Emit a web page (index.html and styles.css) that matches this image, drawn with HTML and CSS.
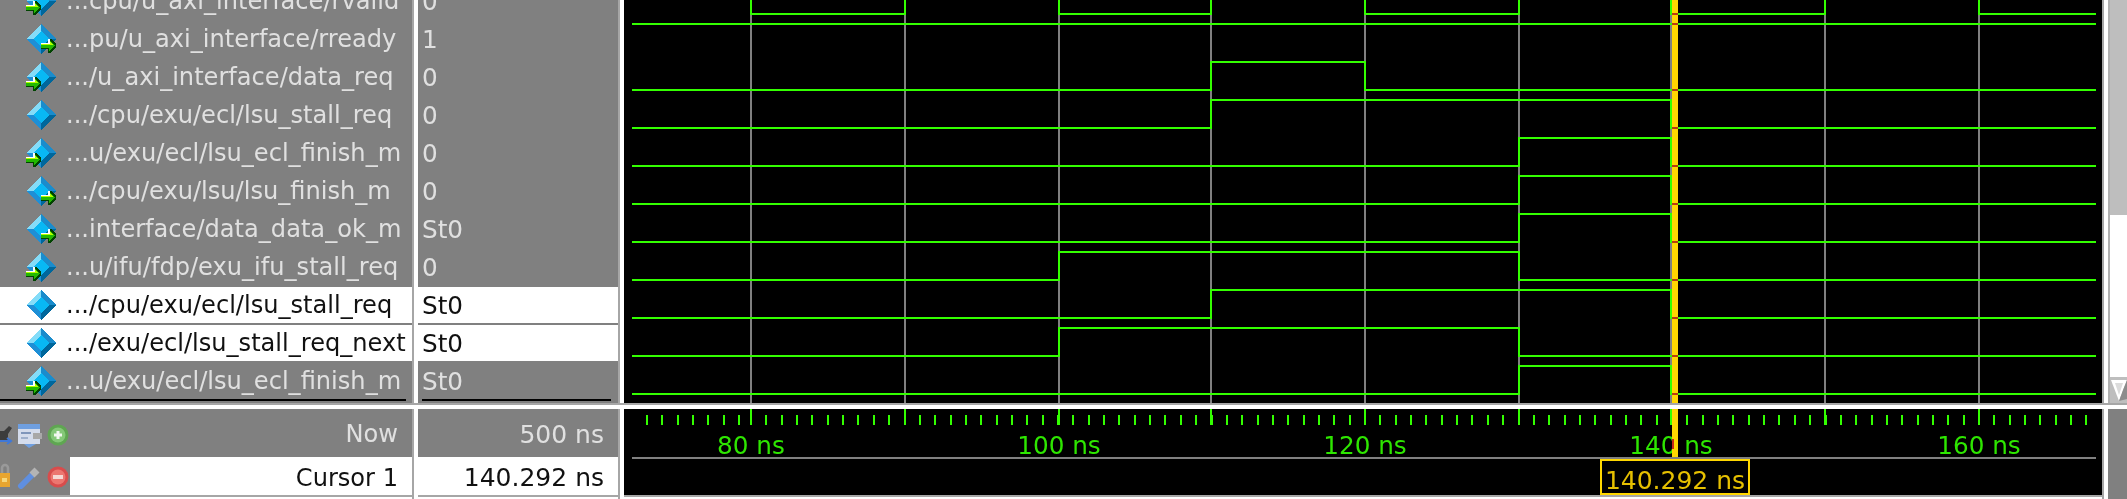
FILE: index.html
```html
<!DOCTYPE html>
<html>
  <head>
    <title>Wave</title>
    <link rel="stylesheet" href="styles.css">
  </head>
  <body>
    <svg class="defs" width="0" height="0">
      <symbol id="diamond" viewBox="0 0 30 30">
        <polygon points="15,0 30,15 15,30 0,15" fill="#1e8fd6"/>
        <polygon points="15,0 15,7 7,15 0,15" fill="#84dcf8"/>
        <polygon points="15,0 30,15 23,15 15,7" fill="#1a8ccc"/>
        <polygon points="30,15 15,30 15,23 23,15" fill="#00679c"/>
        <polygon points="15,7 23,15 15,23 7,15" fill="#08b8f4"/>
      </symbol>
      <symbol id="arrow" viewBox="0 0 15 15">
        <polygon points="8,0 10,0 15,5 15,8 9,14 7,14 7,10 0,10 0,4 8,4" fill="#004400"/>
        <polygon points="8,1 14,6 14,7 8,12 8,9 0,9 0,5 8,5" fill="#22b800"/>
        <polygon points="8,2 13,6 0,6 0,5 8,5" fill="#b4ff00"/>
        <rect x="7" y="0" width="2" height="5" fill="#fff"/>
        <rect x="0" y="4" width="8" height="1" fill="#fff"/>
      </symbol>
    </svg>

    <div class="main">
      <div class="names">
        <div class="row"><svg class="sig"><use href="#diamond" width="30" height="30"/><use href="#arrow" y="15" width="15" height="15"/></svg><span>...cpu/u_axi_interface/rvalid</span></div>
        <div class="row"><svg class="sig"><use href="#diamond" width="30" height="30"/><use href="#arrow" x="15" y="15" width="15" height="15"/></svg><span>...pu/u_axi_interface/rready</span></div>
        <div class="row"><svg class="sig"><use href="#diamond" width="30" height="30"/><use href="#arrow" y="15" width="15" height="15"/></svg><span>.../u_axi_interface/data_req</span></div>
        <div class="row"><svg class="sig"><use href="#diamond" width="30" height="30"/></svg><span>.../cpu/exu/ecl/lsu_stall_req</span></div>
        <div class="row"><svg class="sig"><use href="#diamond" width="30" height="30"/><use href="#arrow" y="15" width="15" height="15"/></svg><span>...u/exu/ecl/lsu_ecl_finish_m</span></div>
        <div class="row"><svg class="sig"><use href="#diamond" width="30" height="30"/><use href="#arrow" x="15" y="15" width="15" height="15"/></svg><span>.../cpu/exu/lsu/lsu_finish_m</span></div>
        <div class="row"><svg class="sig"><use href="#diamond" width="30" height="30"/><use href="#arrow" x="15" y="15" width="15" height="15"/></svg><span>...interface/data_data_ok_m</span></div>
        <div class="row"><svg class="sig"><use href="#diamond" width="30" height="30"/><use href="#arrow" y="15" width="15" height="15"/></svg><span>...u/ifu/fdp/exu_ifu_stall_req</span></div>
        <div class="row picked"><svg class="sig"><use href="#diamond" width="30" height="30"/></svg><span>.../cpu/exu/ecl/lsu_stall_req</span></div>
        <div class="row picked"><svg class="sig"><use href="#diamond" width="30" height="30"/></svg><span>.../exu/ecl/lsu_stall_req_next</span></div>
        <div class="row last"><svg class="sig"><use href="#diamond" width="30" height="30"/><use href="#arrow" y="15" width="15" height="15"/></svg><span>...u/exu/ecl/lsu_ecl_finish_m</span></div>
        <div class="rule"></div>
      </div>
      <div class="split"></div>
      <div class="values">
        <div class="row"><span>0</span></div>
        <div class="row"><span>1</span></div>
        <div class="row"><span>0</span></div>
        <div class="row"><span>0</span></div>
        <div class="row"><span>0</span></div>
        <div class="row"><span>0</span></div>
        <div class="row"><span>St0</span></div>
        <div class="row"><span>0</span></div>
        <div class="row picked"><span>St0</span></div>
        <div class="row picked"><span>St0</span></div>
        <div class="row last"><span>St0</span></div>
        <div class="rule"></div>
      </div>
      <div class="split"></div>
      <svg class="wave" viewBox="624 0 1478 403">
        <path class="grid" d="M751 0V403M905 0V403M1059 0V403M1211 0V403M1365 0V403M1519 0V403M1671 0V403M1825 0V403M1979 0V403"/>
        <path class="trace" d="M751 -2V14H905V-2M1059 -2V14H1211V-2M1365 -2V14H1519V-2M1671 -2V14H1825V-2M1979 -2V14H2096"/>
        <path class="trace" d="M632 24H2096"/>
        <path class="trace" d="M632 90H1211V62H1365V90H2096"/>
        <path class="trace" d="M632 128H1211V100H1671V128H2096"/>
        <path class="trace" d="M632 166H1519V138H1671V166H2096"/>
        <path class="trace" d="M632 204H1519V176H1671V204H2096"/>
        <path class="trace" d="M632 242H1519V214H1671V242H2096"/>
        <path class="trace" d="M632 280H1059V252H1519V280H2096"/>
        <path class="trace" d="M632 318H1211V290H1671V318H2096"/>
        <path class="trace" d="M632 356H1059V328H1519V356H2096"/>
        <path class="trace" d="M632 394H1519V366H1671V394H2096"/>
        <rect class="cursor" x="1672" y="0" width="6" height="403"/>
        <path class="cross" d="M1672 14h6M1672 24h6M1672 90h6M1672 128h6M1672 166h6M1672 204h6M1672 242h6M1672 280h6M1672 318h6M1672 356h6M1672 394h6"/>
      </svg>
      <div class="split"></div>
      <div class="scroll">
        <div class="thumb"></div>
        <div class="track"></div>
        <div class="btn">
          <svg width="17" height="26" viewBox="0 0 17 26">
            <polygon points="1,3 17,3 9,24" fill="#fff"/>
            <polygon points="9,24 13,13 17,3 17,22" fill="#8c8c8c"/>
            <polygon points="5,6 13,6 9,18" fill="#dcdcdc"/>
          </svg>
        </div>
      </div>
    </div>

    <div class="hsplit"></div>

    <div class="foot">
      <div class="names">
        <div class="now">
          <svg class="tools" viewBox="0 409 70 48">
            <path d="M0 431h4l5-5 3 2-4 6v6H0z" fill="#3c3c3c"/>
            <path d="M0 441h10M7 438l4 3-4 3" stroke="#3f78d8" stroke-width="2" fill="none"/>
            <rect x="18" y="424" width="22" height="20" fill="#d4dcec"/>
            <rect x="18" y="424" width="22" height="5" fill="#6f9fe0"/>
            <rect x="21" y="432" width="10" height="2" fill="#7f96bb"/>
            <rect x="21" y="437" width="7" height="2" fill="#9fb0cc"/>
            <rect x="33" y="433" width="9" height="6" fill="#a8a8a8"/>
            <polygon points="24,444 36,444 29,448" fill="#6f9fe0"/>
            <circle cx="58" cy="435" r="10.5" fill="#5fa652"/>
            <circle cx="58" cy="435" r="7.5" fill="#85c878"/>
            <path d="M58 431v8M54 435h8" stroke="#f2f8f0" stroke-width="3"/>
          </svg>
          <span>Now</span>
        </div>
        <div class="cur">
          <svg class="tools" viewBox="0 457 70 38">
            <path d="M2 473v-5a3 3 0 0 1 6 0v5" stroke="#9a9a9a" stroke-width="2.5" fill="none"/>
            <rect x="0" y="473" width="10" height="14" fill="#e9a52e"/>
            <rect x="2" y="478" width="5" height="4" fill="#f7d77a"/>
            <path d="M21 486L33 474" stroke="#5f8fe0" stroke-width="6" stroke-linecap="round"/>
            <path d="M32 475L37 470" stroke="#b4b4b4" stroke-width="7"/>
            <path d="M36 465l5 5" stroke="#808080" stroke-width="4"/>
            <circle cx="58" cy="477" r="10.5" fill="#d84c4c"/>
            <circle cx="58" cy="477" r="7.5" fill="#ec7670"/>
            <rect x="53" y="475" width="10" height="4" fill="#f6d8d4"/>
          </svg>
          <div class="cur-name"><span>Cursor 1</span></div>
        </div>
      </div>
      <div class="split"></div>
      <div class="values">
        <div class="now"><span>500 ns</span></div>
        <div class="cur"><div class="cur-name"><span>140.292 ns</span></div></div>
      </div>
      <div class="split"></div>
      <svg class="ruler" viewBox="624 409 1478 86">
        <line class="minor" x1="646" x2="741" y1="420" y2="420"/>
        <line class="minor" x1="750" x2="2090" y1="420" y2="420"/>
        <path class="major" d="M751 409V425M905 409V425M1059 409V425M1211 409V425M1365 409V425M1519 409V425M1671 409V425M1825 409V425M1979 409V425"/>
        <text class="tick" x="751" y="454">80 ns</text>
        <text class="tick" x="1059" y="454">100 ns</text>
        <text class="tick" x="1365" y="454">120 ns</text>
        <text class="tick" x="1671" y="454">140 ns</text>
        <text class="tick" x="1979" y="454">160 ns</text>
        <rect class="cursor" x="1672" y="409" width="6" height="48"/>
        <rect class="mark" x="1672" y="439" width="2" height="10"/>
        <line class="base" x1="632" x2="2096" y1="458" y2="458"/>
        <rect class="stamp" x="1601" y="460" width="148" height="34"/>
        <text class="stamp-text" x="1675" y="489">140.292 ns</text>
      </svg>
      <div class="split"></div>
      <div class="corner"></div>
    </div>
  </body>
</html>
```

FILE: styles.css
```css
html,
body {
  margin: 0;
  padding: 0;
}
body {
  width: 2127px;
  height: 499px;
  overflow: hidden;
  background-color: #ffffff;
  font-family: "DejaVu Sans", sans-serif;
  font-size: 24.7px;
  color: #e0e0e0;
}
.defs {
  display: block;
  height: 0;
}
.main {
  display: flex;
  height: 403px;
  overflow: hidden;
}
.names {
  width: 412px;
  flex-shrink: 0;
  background-color: #808080;
  font-size: 24.1px;
}
.values {
  width: 200px;
  flex-shrink: 0;
  background-color: #808080;
}
.split {
  width: 4px;
  flex-shrink: 0;
  background-color: #ffffff;
  border-left: 2px solid #a6a6a6;
}
/* first row sits partly above the top edge */
.main .names,
.main .values {
  margin-top: -17px;
  height: 420px;
}
.row {
  display: flex;
  align-items: center;
  height: 36px;
  margin-bottom: 2px;
  white-space: nowrap;
}
.row span,
.now span,
.cur-name span {
  filter: blur(0.4px);
}
.names .row {
  padding-left: 26px;
}
.values .row {
  padding-left: 4px;
}
.picked {
  background-color: #ffffff;
  color: #111111;
}
.last {
  margin-bottom: 0;
}
.rule {
  height: 2px;
  background-color: #000000;
}
.names .rule {
  margin-right: 6px;
}
.values .rule {
  margin: 0 7px 0 4px;
}
.sig {
  width: 30px;
  height: 30px;
  flex-shrink: 0;
  margin-right: 10px;
  shape-rendering: crispEdges;
}
.wave {
  display: block;
  width: 1478px;
  height: 403px;
  flex-shrink: 0;
  background-color: #000000;
}
.grid {
  stroke: #808080;
  stroke-width: 2;
  fill: none;
}
.trace {
  stroke: #33ff00;
  stroke-width: 2;
  fill: none;
}
.cursor {
  fill: #ffd700;
}
.cross {
  stroke: #b83a12;
  stroke-width: 2;
  fill: none;
}
.scroll {
  width: 17px;
  flex-shrink: 0;
  border-left: 2px solid #b0b0b0;
  display: flex;
  flex-direction: column;
}
.thumb {
  height: 215px;
  background-color: #bebebe;
  border-bottom: 2px solid #ffffff;
}
.track {
  flex: 1;
  background-color: #ffffff;
}
.btn {
  height: 26px;
  background-color: #bebebe;
}
.btn svg {
  display: block;
}
.hsplit {
  height: 4px;
  background-color: #ffffff;
  border-top: 2px solid #a6a6a6;
}
.foot {
  display: flex;
  height: 90px;
}
.foot .names,
.foot .values {
  height: 86px;
}
.now {
  display: flex;
  align-items: center;
  justify-content: space-between;
  height: 48px;
  padding-right: 14px;
}
.now span {
  padding-top: 2px;
}
.foot .values .now {
  justify-content: flex-end;
  padding-right: 14px;
}
.cur {
  display: flex;
  height: 38px;
}
.cur-name {
  flex: 1;
  display: flex;
  align-items: center;
  justify-content: flex-end;
  padding-right: 14px;
  padding-top: 3px;
  box-sizing: border-box;
  background-color: #ffffff;
  color: #111111;
}
.foot .values {
  font-size: 25px;
}
.foot .values .cur-name {
  padding-right: 14px;
}
.tools {
  display: block;
  width: 70px;
  flex-shrink: 0;
  filter: blur(0.6px);
}
.now .tools {
  height: 48px;
}
.cur .tools {
  height: 38px;
}
.ruler {
  display: block;
  width: 1478px;
  height: 86px;
  flex-shrink: 0;
  background-color: #000000;
}
.minor {
  stroke: #33ff00;
  stroke-width: 10;
  stroke-dasharray: 2 13.35;
  shape-rendering: crispEdges;
}
.major {
  stroke: #33ff00;
  stroke-width: 2;
  fill: none;
}
.tick {
  fill: #2ee600;
  font-size: 24.7px;
  text-anchor: middle;
  filter: blur(0.4px);
}
.mark {
  fill: #c8281a;
}
.base {
  stroke: #808080;
  stroke-width: 2;
}
.stamp {
  fill: #000000;
  stroke: #ffd700;
  stroke-width: 2;
}
.stamp-text {
  fill: #e6c000;
  font-size: 25px;
  text-anchor: middle;
  filter: blur(0.4px);
}
.corner {
  width: 19px;
  height: 90px;
  background-color: #808080;
}
.foot .ruler,
.foot .names,
.foot .values {
  border-bottom: 2px solid #a6a6a6;
}
```
